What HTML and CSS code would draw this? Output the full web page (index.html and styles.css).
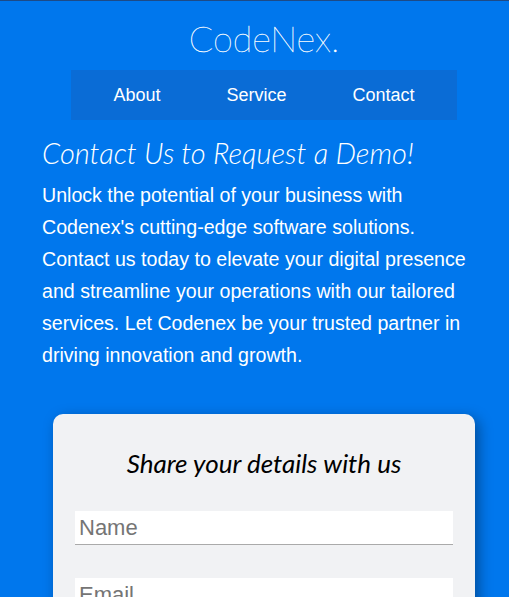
FILE: index.html
```html
<!DOCTYPE html>
<html lang="en">
<head>
<meta charset="utf-8">
<title>CodeNex - Contact</title>
<link rel="stylesheet" href="styles.css">
</head>
<body>
<div class="page">
  <header class="header">
    <h1 class="logo">CodeNex.</h1>
    <nav class="nav">
      <a href="#" class="nav-link">About</a>
      <a href="#" class="nav-link">Service</a>
      <a href="#" class="nav-link">Contact</a>
    </nav>
  </header>
  <section class="intro">
    <h2 class="intro-title">Contact Us to Request a Demo!</h2>
    <p class="intro-text">Unlock the potential of your business with Codenex's cutting-edge software solutions. Contact us today to elevate your digital presence and streamline your operations with our tailored services. Let Codenex be your trusted partner in driving innovation and growth.</p>
  </section>
  <section class="card">
    <h3 class="card-title">Share your details with us</h3>
    <form class="form">
      <input class="field" type="text" placeholder="Name">
      <input class="field" type="email" placeholder="Email">
    </form>
  </section>
</div>
</body>
</html>
```
FILE: styles.css
```css
html, body {
  margin: 0;
  padding: 0;
}
body {
  background: #0077ed;
  border-top: 1px solid #1d4a86;
  font-family: "Liberation Sans", Arial, sans-serif;
  color: #fff;
  overflow: hidden;
}
.page {
  padding-left: 19px;
}
.header {
  display: flex;
  flex-direction: column;
  align-items: center;
}
.logo {
  margin: 14px 0 0;
  font-family: Lato, sans-serif;
  font-weight: 100;
  font-size: 36px;
  line-height: 46px;
  color: #fff;
  -webkit-text-stroke: 0.3px #fff;
}
.nav {
  margin-top: 9px;
  width: 386px;
  height: 50px;
  background: #0a6cd6;
  display: flex;
  align-items: center;
  justify-content: center;
  gap: 66px;
}
.nav-link {
  color: #fff;
  text-decoration: none;
  font-size: 18px;
}
.intro {
  padding: 0 23px;
}
.intro-title {
  margin: 15px 0 0;
  font-family: Lato, sans-serif;
  font-weight: 300;
  font-style: italic;
  font-size: 29px;
  line-height: 35px;
}
.intro-text {
  margin: 9px 0 0;
  font-size: 19.6px;
  line-height: 32px;
}
.card {
  margin: 43px auto 0;
  width: 422px;
  box-sizing: border-box;
  background: #f1f2f4;
  border-radius: 10px;
  padding: 34px 22px 20px;
  box-shadow: 4px 4px 14px rgba(0, 0, 0, 0.35);
  color: #000;
}
.card-title {
  margin: 0;
  text-align: center;
  font-family: Lato, sans-serif;
  font-weight: 400;
  font-style: italic;
  font-size: 26px;
  line-height: 30px;
}
.form {
  margin-top: 33px;
  display: flex;
  flex-direction: column;
  gap: 33px;
}
.field {
  display: block;
  height: 34px;
  box-sizing: border-box;
  border: none;
  border-bottom: 1px solid #aaa;
  background: #fff;
  padding: 0 4px;
  font-family: "Liberation Sans", Arial, sans-serif;
  font-size: 22px;
  color: #333;
}
.field::placeholder {
  color: #757575;
}
```
